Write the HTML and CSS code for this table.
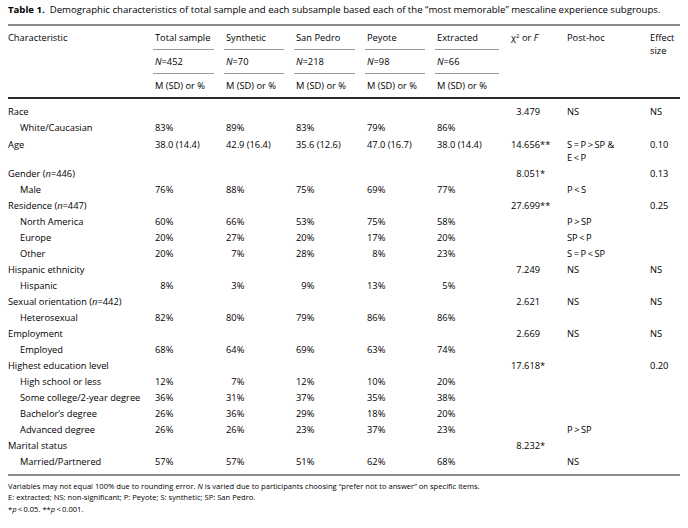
FILE: index.html
```html
<!DOCTYPE html>
<html>
<head>
<meta charset="utf-8">
<link rel="stylesheet" href="styles.css">
</head>
<body>
<div class="page">
  <div class="caption"><b>Table 1.</b>&nbsp; Demographic characteristics of total sample and each subsample based each of the “most memorable” mescaline experience subgroups.</div>
  <div class="rule-top"></div>
  <div class="head">
    <div class="hc first">Characteristic</div>
    <div class="grp"><div class="g1">Total sample</div><div class="g2"><i>N</i>=452</div><div class="g3">M (SD) or %</div></div>
    <div class="grp"><div class="g1">Synthetic</div><div class="g2"><i>N</i>=70</div><div class="g3">M (SD) or %</div></div>
    <div class="grp"><div class="g1">San Pedro</div><div class="g2"><i>N</i>=218</div><div class="g3">M (SD) or %</div></div>
    <div class="grp"><div class="g1">Peyote</div><div class="g2"><i>N</i>=98</div><div class="g3">M (SD) or %</div></div>
    <div class="grp"><div class="g1">Extracted</div><div class="g2"><i>N</i>=66</div><div class="g3">M (SD) or %</div></div>
    <div class="hc">χ<sup>2</sup> or <i>F</i></div>
    <div class="hc">Post-hoc</div>
    <div class="hc">Effect<br>size</div>
  </div>
  <div class="rule-thick"></div>
  <div class="body">
    <div class="row"><div>Race</div><div></div><div></div><div></div><div></div><div></div><div>&#8199;3.479</div><div>NS</div><div>NS</div></div>
    <div class="row"><div class="sub">White/Caucasian</div><div>83%</div><div>89%</div><div>83%</div><div>79%</div><div>86%</div><div></div><div></div><div></div></div>
    <div class="row tall"><div>Age</div><div>38.0 (14.4)</div><div>42.9 (16.4)</div><div>35.6 (12.6)</div><div>47.0 (16.7)</div><div>38.0 (14.4)</div><div>14.656**</div><div>S&thinsp;=&thinsp;P&thinsp;&gt;&thinsp;SP &amp;<br>E&thinsp;&lt;&thinsp;P</div><div>0.10</div></div>
    <div class="row"><div>Gender (<i>n</i>=446)</div><div></div><div></div><div></div><div></div><div></div><div>&#8199;8.051*</div><div></div><div>0.13</div></div>
    <div class="row"><div class="sub">Male</div><div>76%</div><div>88%</div><div>75%</div><div>69%</div><div>77%</div><div></div><div>P&thinsp;&lt;&thinsp;S</div><div></div></div>
    <div class="row"><div>Residence (<i>n</i>=447)</div><div></div><div></div><div></div><div></div><div></div><div>27.699**</div><div></div><div>0.25</div></div>
    <div class="row"><div class="sub">North America</div><div>60%</div><div>66%</div><div>53%</div><div>75%</div><div>58%</div><div></div><div>P&thinsp;&gt;&thinsp;SP</div><div></div></div>
    <div class="row"><div class="sub">Europe</div><div>20%</div><div>27%</div><div>20%</div><div>17%</div><div>20%</div><div></div><div>SP&thinsp;&lt;&thinsp;P</div><div></div></div>
    <div class="row"><div class="sub">Other</div><div>20%</div><div>&#8199;7%</div><div>28%</div><div>&#8199;8%</div><div>23%</div><div></div><div>S&thinsp;=&thinsp;P&thinsp;&lt;&thinsp;SP</div><div></div></div>
    <div class="row"><div>Hispanic ethnicity</div><div></div><div></div><div></div><div></div><div></div><div>&#8199;7.249</div><div>NS</div><div>NS</div></div>
    <div class="row"><div class="sub">Hispanic</div><div>&#8199;8%</div><div>&#8199;3%</div><div>&#8199;9%</div><div>13%</div><div>&#8199;5%</div><div></div><div></div><div></div></div>
    <div class="row"><div>Sexual orientation (<i>n</i>=442)</div><div></div><div></div><div></div><div></div><div></div><div>&#8199;2.621</div><div>NS</div><div>NS</div></div>
    <div class="row"><div class="sub">Heterosexual</div><div>82%</div><div>80%</div><div>79%</div><div>86%</div><div>86%</div><div></div><div></div><div></div></div>
    <div class="row"><div>Employment</div><div></div><div></div><div></div><div></div><div></div><div>&#8199;2.669</div><div>NS</div><div>NS</div></div>
    <div class="row"><div class="sub">Employed</div><div>68%</div><div>64%</div><div>69%</div><div>63%</div><div>74%</div><div></div><div></div><div></div></div>
    <div class="row"><div>Highest education level</div><div></div><div></div><div></div><div></div><div></div><div>17.618*</div><div></div><div>0.20</div></div>
    <div class="row"><div class="sub">High school or less</div><div>12%</div><div>&#8199;7%</div><div>12%</div><div>10%</div><div>20%</div><div></div><div></div><div></div></div>
    <div class="row"><div class="sub">Some college/2-year degree</div><div>36%</div><div>31%</div><div>37%</div><div>35%</div><div>38%</div><div></div><div></div><div></div></div>
    <div class="row"><div class="sub">Bachelor’s degree</div><div>26%</div><div>36%</div><div>29%</div><div>18%</div><div>20%</div><div></div><div></div><div></div></div>
    <div class="row"><div class="sub">Advanced degree</div><div>26%</div><div>26%</div><div>23%</div><div>37%</div><div>23%</div><div></div><div>P&thinsp;&gt;&thinsp;SP</div><div></div></div>
    <div class="row"><div>Marital status</div><div></div><div></div><div></div><div></div><div></div><div>&#8199;8.232*</div><div></div><div></div></div>
    <div class="row"><div class="sub">Married/Partnered</div><div>57%</div><div>57%</div><div>51%</div><div>62%</div><div>68%</div><div></div><div>NS</div><div></div></div>
  </div>
  <div class="rule-bottom"></div>
  <div class="notes">
    <p>Variables may not equal 100% due to rounding error. <i>N</i> is varied due to participants choosing “prefer not to answer” on specific items.</p>
    <p>E: extracted; NS: non-significant; P: Peyote; S: synthetic; SP: San Pedro.</p>
    <p>*<i>p</i>&thinsp;&lt;&thinsp;0.05. **<i>p</i>&thinsp;&lt;&thinsp;0.001.</p>
  </div>
</div>
</body>
</html>
```
FILE: styles.css
```css
html, body {
  margin: 0;
  padding: 0;
  background: #fff;
}
body {
  font-family: "Open Sans", "DejaVu Sans", sans-serif;
  font-size: 9.3px;
  color: #000;
  font-variant-numeric: tabular-nums;
}
.page {
  width: 672px;
  padding: 4px 8px 0 8px;
}
.caption {
  font-size: 9.6px;
  line-height: 12px;
  white-space: nowrap;
}
.caption b {
  font-weight: 700;
}
.rule-top {
  height: 2px;
  background: #8a8a8a;
  margin-top: 8px;
}
.head {
  display: grid;
  grid-template-columns: 147px 71px 70px 71px 70px 74px 56px 83px 30px;
  padding-top: 5px;
}
.hc {
  line-height: 13px;
}
.grp {
  display: flex;
  flex-direction: column;
  padding-right: 12px;
}
.g1, .g2 {
  line-height: 13px;
  padding-bottom: 5px;
  margin-left: -2px;
  padding-left: 2px;
  border-bottom: 1.5px solid #9a9a9a;
}
.g2 {
  padding-top: 5px;
}
.g3 {
  line-height: 13px;
  padding-top: 5px;
  padding-bottom: 5px;
}
sup {
  font-size: 6px;
  line-height: 0;
  vertical-align: 3px;
}
.rule-thick {
  height: 2px;
  background: #2a2a2a;
}
.body {
  padding-top: 5px;
  padding-bottom: 4px;
}
.row {
  display: grid;
  grid-template-columns: 147px 71px 70px 71px 70px 74px 56px 83px 30px;
  line-height: 12px;
  padding: 2px 0;
  white-space: nowrap;
}
.row.tall {
  line-height: 13px;
}
.sub {
  padding-left: 12px;
}
.rule-bottom {
  height: 1.5px;
  background: #8a8a8a;
}
.notes {
  padding-top: 5px;
  font-size: 7.6px;
}
.notes p {
  margin: 0;
  line-height: 11.5px;
}
```
